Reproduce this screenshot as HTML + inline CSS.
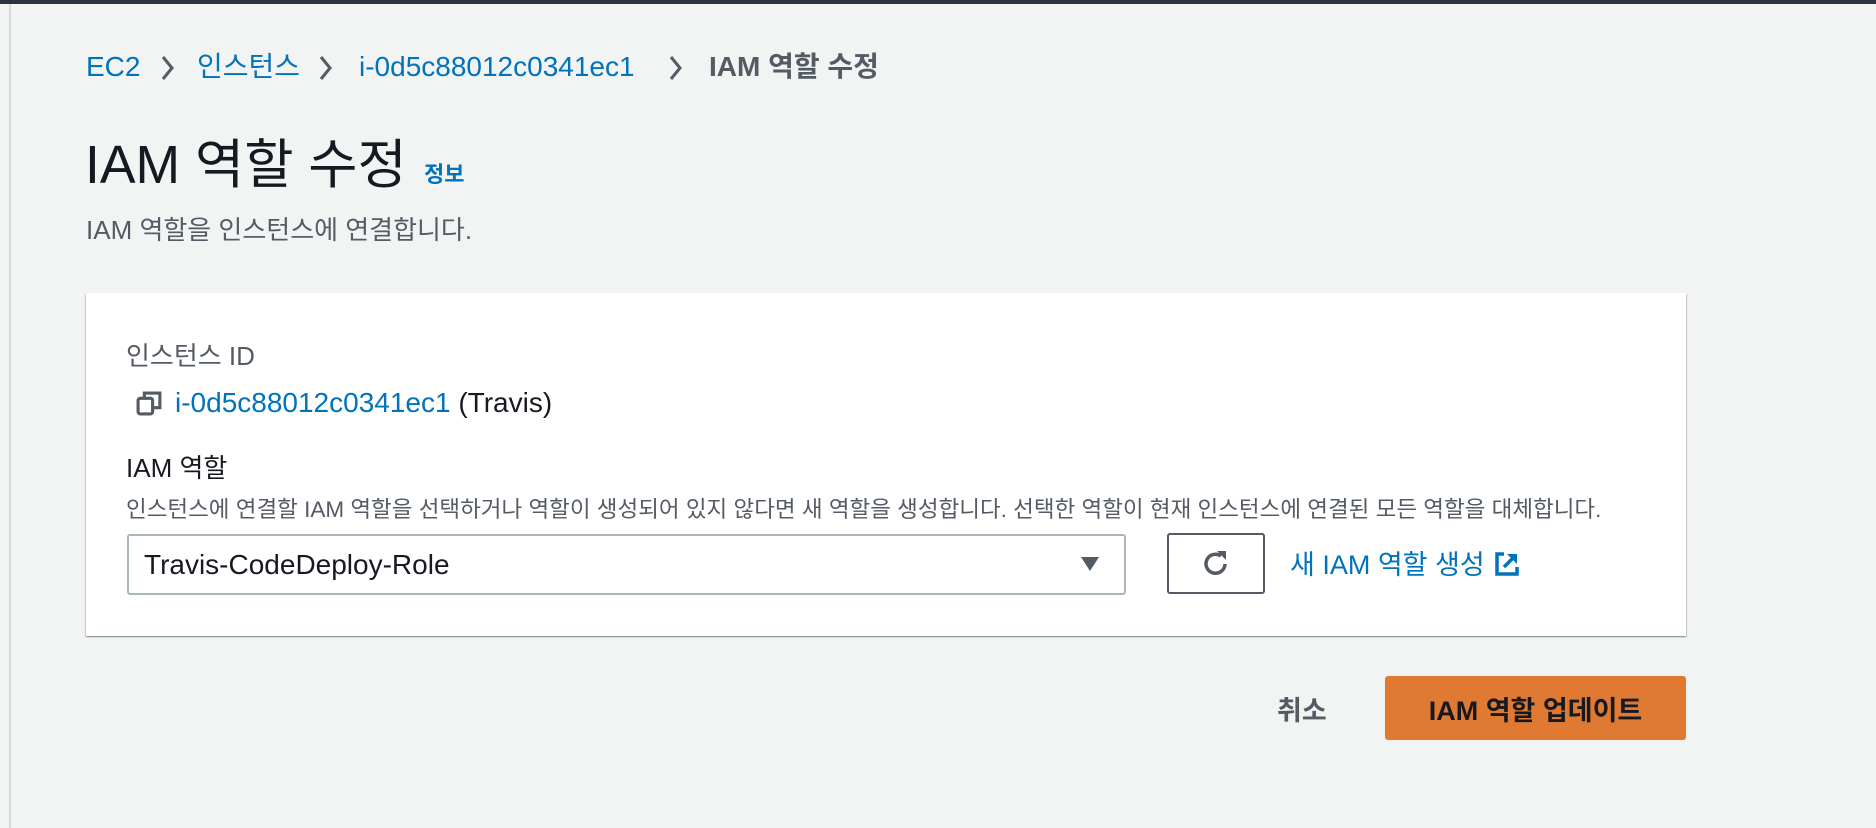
<!DOCTYPE html>
<html><head><meta charset="utf-8"><style>
*{margin:0;padding:0;box-sizing:border-box}
body{width:1876px;height:828px;overflow:hidden;background:#f2f3f3;font-family:"Liberation Sans","Noto Sans CJK KR",sans-serif;position:relative;color:#16191f}
.topbar{position:absolute;left:0;top:0;width:1876px;height:4px;background:#2a3340}
.lb{position:absolute;left:9px;top:4px;width:2px;height:824px;background:#d5dbdb}
.a{position:absolute;white-space:nowrap}
.blue{color:#0073bb}
.crumb{top:50px;font-size:28px;line-height:34px}
.sep{top:54px}
.card{position:absolute;left:86px;top:293px;width:1600px;height:343px;background:#fff;box-shadow:0 1px 1px rgba(0,28,36,.3),1px 1px 1px rgba(0,28,36,.15),-1px 1px 1px rgba(0,28,36,.15)}
</style></head><body>
<div class="topbar"></div><div class="lb"></div>
<div class="a crumb blue" style="left:86px">EC2</div>
<svg class="a sep" style="left:160px" width="16" height="28" viewBox="0 0 16 28"><path d="M3 3 L12 14 L3 25" stroke="#545b64" stroke-width="3" fill="none"/></svg>
<div class="a crumb blue" style="left:197px">인스턴스</div>
<svg class="a sep" style="left:318px" width="16" height="28" viewBox="0 0 16 28"><path d="M3 3 L12 14 L3 25" stroke="#545b64" stroke-width="3" fill="none"/></svg>
<div class="a crumb blue" style="left:359px">i-0d5c88012c0341ec1</div>
<svg class="a sep" style="left:668px" width="16" height="28" viewBox="0 0 16 28"><path d="M3 3 L12 14 L3 25" stroke="#545b64" stroke-width="3" fill="none"/></svg>
<div class="a crumb" style="left:709px;font-weight:bold;color:#545b64">IAM 역할 수정</div>
<div class="a" style="left:85px;top:133px;font-size:53.5px;line-height:66px">IAM 역할 수정</div>
<div class="a blue" style="left:424px;top:161px;font-size:22px;line-height:28px;font-weight:bold">정보</div>
<div class="a" style="left:86px;top:214px;font-size:26px;line-height:32px;color:#545b64">IAM 역할을 인스턴스에 연결합니다.</div>
<div class="card"></div>
<div class="a" style="left:126px;top:340px;font-size:26px;line-height:32px;color:#545b64">인스턴스 ID</div>
<svg class="a" style="left:136px;top:390px" width="27" height="27" viewBox="0 0 26 26"><rect x="2" y="8" width="14" height="15" rx="2" fill="none" stroke="#545b64" stroke-width="3"/><path d="M8 8 V3 H23 V17 H16" fill="none" stroke="#545b64" stroke-width="3"/></svg>
<div class="a" style="left:175px;top:386px;font-size:28px;line-height:34px"><span class="blue">i-0d5c88012c0341ec1</span> (Travis)</div>
<div class="a" style="left:126px;top:452px;font-size:26px;line-height:32px">IAM 역할</div>
<div class="a" style="left:126px;top:496px;font-size:22.5px;line-height:28px;color:#545b64">인스턴스에 연결할 IAM 역할을 선택하거나 역할이 생성되어 있지 않다면 새 역할을 생성합니다. 선택한 역할이 현재 인스턴스에 연결된 모든 역할을 대체합니다.</div>
<div class="a" style="left:127px;top:534px;width:999px;height:61px;border:2px solid #aab7b8;border-radius:3px;background:#fff"></div>
<div class="a" style="left:144px;top:548px;font-size:28px;line-height:34px">Travis-CodeDeploy-Role</div>
<svg class="a" style="left:1081px;top:557px" width="18" height="14"><path d="M0 0 H18 L9 14Z" fill="#545b64"/></svg>
<div class="a" style="left:1167px;top:533px;width:98px;height:61px;border:2px solid #545b64;border-radius:3px;background:#fff"></div>
<svg class="a" style="left:1200px;top:548px" width="32" height="32" viewBox="0 0 32 32"><path d="M25 16 A9.5 9.5 0 1 1 21 8" fill="none" stroke="#545b64" stroke-width="3.5"/><path d="M17 3 H26 V12 Z" fill="#545b64"/></svg>
<div class="a blue" style="left:1290px;top:548px;font-size:27px;line-height:34px">새 IAM 역할 생성</div>
<svg class="a" style="left:1494px;top:551px" width="26" height="26" viewBox="0 0 26 26"><path d="M10 3 H3 V23 H23 V16" fill="none" stroke="#0073bb" stroke-width="3.5"/><path d="M13 3 H23 V13 Z" fill="#0073bb"/><path d="M21 5 L10 16" stroke="#0073bb" stroke-width="3.5"/></svg>
<div class="a" style="left:1277px;top:694px;font-size:27px;line-height:34px;font-weight:bold;color:#545b64">취소</div>
<div class="a" style="left:1385px;top:676px;width:301px;height:64px;background:#e07a33;border-radius:3px"></div>
<div class="a" style="left:1385px;top:694px;width:301px;text-align:center;font-size:27px;line-height:34px;font-weight:bold">IAM 역할 업데이트</div>
</body></html>
